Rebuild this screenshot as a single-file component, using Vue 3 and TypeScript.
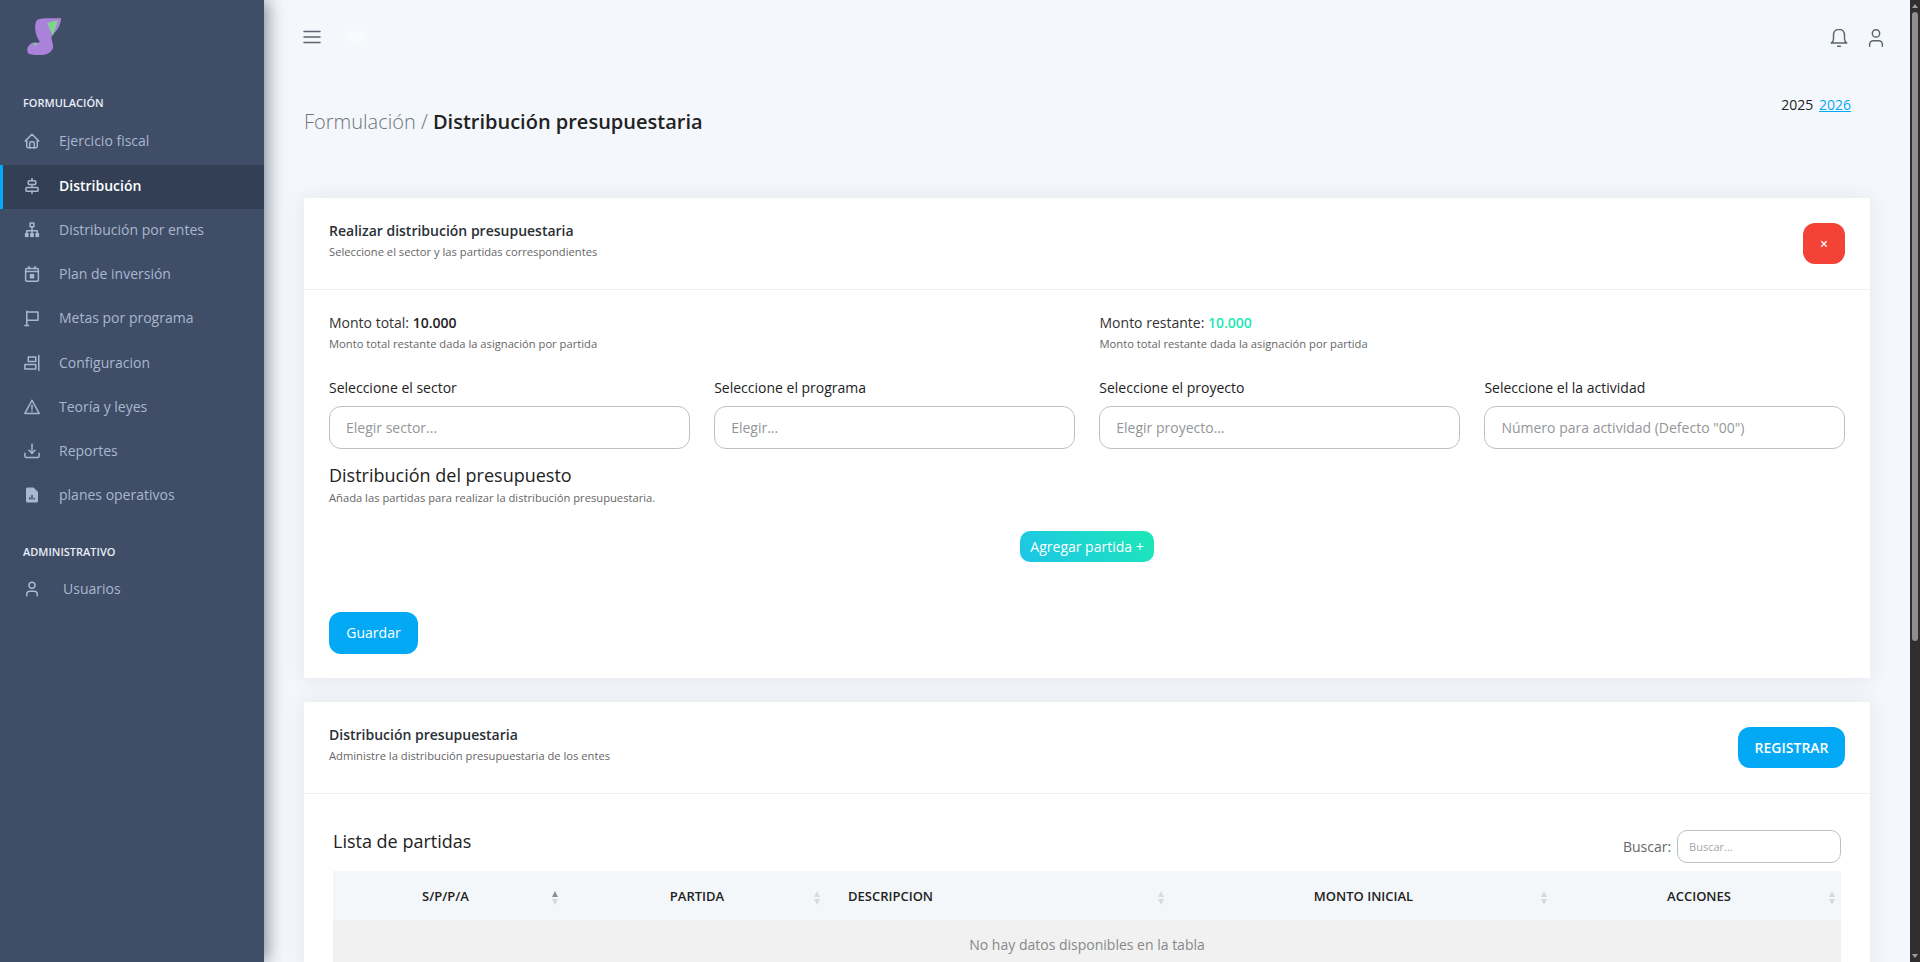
<script setup lang="ts">
interface NavItem {
  label: string
  stroke: string[]
  fill?: string[]
  dark?: string[]
  active?: boolean
}

const nav: NavItem[] = [
  {
    label: 'Ejercicio fiscal',
    stroke: ['M5 12H3l9-9 9 9h-2', 'M5 12v7a2 2 0 0 0 2 2h10a2 2 0 0 0 2-2v-7', 'M9 21v-6a2 2 0 0 1 2-2h2a2 2 0 0 1 2 2v6'],
  },
  {
    label: 'Distribución',
    active: true,
    stroke: [
      'M12 2v3', 'M8 5h8a1 1 0 0 1 1 1v3a1 1 0 0 1-1 1H8a1 1 0 0 1-1-1V6a1 1 0 0 1 1-1z', 'M12 10v4',
      'M5 14h14a1 1 0 0 1 1 1v3a1 1 0 0 1-1 1H5a1 1 0 0 1-1-1v-3a1 1 0 0 1 1-1z', 'M12 19v3',
    ],
  },
  {
    label: 'Distribución por entes',
    stroke: ['M9.5 2.5h5v5h-5z', 'M12 8v5', 'M5 16v-3h14v3', 'M12 13v3'],
    fill: ['M2.5 16h5v5.500h-5z', 'M9.500 16h5v5.500h-5z', 'M16.500 16h5v5.500h-5z'],
  },
  {
    label: 'Plan de inversión',
    stroke: ['M5 4.500h14a1.500 1.500 0 0 1 1.500 1.500v14a1.500 1.500 0 0 1-1.500 1.500H5A1.500 1.500 0 0 1 3.500 20V6A1.500 1.500 0 0 1 5 4.500z', 'M8 2v3', 'M16 2v3', 'M3.500 8.500h17'],
    fill: ['M9 12h6v6H9z'],
  },
  { label: 'Metas por programa', stroke: ['M5 22V3', 'M5 4h15v11H5', 'M2.500 22h5'] },
  {
    label: 'Configuracion',
    stroke: ['M21 2v20', 'M7 4h10v6H7z', 'M2.500 14H17v6H2.500z'],
  },
  { label: 'Teoría y leyes', stroke: ['M12 3 2.500 20.500h19z', 'M12 9.500v5.500', 'M12 17.800v.2'] },
  {
    label: 'Reportes',
    stroke: ['M12 3v12', 'M8 11l4 4 4-4', 'M2.500 15v3.500a2 2 0 0 0 2 2h15a2 2 0 0 0 2-2V15'],
  },
  {
    label: 'planes operativos',
    stroke: [],
    fill: ['M6 2h8l6 6v12a2 2 0 0 1-2 2H6a2 2 0 0 1-2-2V4a2 2 0 0 1 2-2z'],
    dark: ['M9 18v-3', 'M12 18v-6', 'M15 18v-2'],
  },
]

const userIcon = ['M12 3a4 4 0 1 0 0 8 4 4 0 0 0 0-8z', 'M5 21v-2a4 4 0 0 1 4-4h6a4 4 0 0 1 4 4v2']

const fields = [
  { label: 'Seleccione el sector', placeholder: 'Elegir sector...' },
  { label: 'Seleccione el programa', placeholder: 'Elegir...' },
  { label: 'Seleccione el proyecto', placeholder: 'Elegir proyecto...' },
  { label: 'Seleccione el la actividad', placeholder: 'Número para actividad (Defecto "00")' },
]

const columns = [
  { label: 'S/P/P/A', key: 'c1', sorted: true },
  { label: 'PARTIDA', key: 'c2', sorted: false },
  { label: 'DESCRIPCION', key: 'c3', sorted: false },
  { label: 'MONTO INICIAL', key: 'c4', sorted: false },
  { label: 'ACCIONES', key: 'c5', sorted: false },
]
</script>

<template>
  <div class="app">
    <aside class="sidebar">
      <div class="logo-row">
        <svg class="logo" viewBox="0 0 34 37" aria-hidden="true">
          <path fill="#ab82d9" d="M10 2C16-1 28 1 34 0c0 6-3 12-7 15-4 3-2 7-1 12 1 6-5 10-11 10-6 0-12 0-14-2-2-4 0-8 4-10 3-1 6 0 8-1C9 19 6 8 10 2z" />
          <path fill="#7fd38c" d="M20 5 31 2l-5 16z" />
          <path fill="#7fd38c" d="M6 25l5 1-3 2z" />
        </svg>
      </div>
      <div class="section-label">FORMULACIÓN</div>
      <ul class="nav-list">
        <li v-for="item in nav" :key="item.label" class="nav-item" :class="{ active: item.active }">
          <svg class="nav-icon" viewBox="0 0 24 24" aria-hidden="true">
            <path v-for="d in item.stroke" :key="d" :d="d" class="ic-stroke" />
            <path v-for="d in item.fill" :key="d" :d="d" class="ic-fill" />
            <path v-for="d in item.dark" :key="d" :d="d" class="ic-dark" />
          </svg>
          <span>{{ item.label }}</span>
        </li>
      </ul>
      <div class="section-label admin">ADMINISTRATIVO</div>
      <ul class="nav-list">
        <li class="nav-item users">
          <svg class="nav-icon" viewBox="0 0 24 24" aria-hidden="true">
            <path v-for="d in userIcon" :key="d" :d="d" class="ic-stroke" />
          </svg>
          <span>Usuarios</span>
        </li>
      </ul>
    </aside>

    <main class="main">
      <header class="topbar">
        <div class="top-left">
          <svg class="top-icon burger" viewBox="0 0 20 20" aria-hidden="true">
            <path d="M2 4.500h16M2 10h16M2 15.500h16" />
          </svg>
          <span class="brand-ghost"></span>
        </div>
        <div class="top-right">
          <svg class="top-icon" viewBox="0 0 24 24" aria-hidden="true">
            <path d="M12 2.500c-3.800 0-6 3-6 6.500v4c0 2-1.200 3.500-2.500 4.500h17c-1.300-1-2.500-2.500-2.500-4.500V9c0-3.500-2.200-6.500-6-6.500z" />
            <path d="M10.500 21h3" />
          </svg>
          <svg class="top-icon" viewBox="0 0 24 24" aria-hidden="true">
            <path v-for="d in userIcon" :key="d" :d="d" />
          </svg>
        </div>
      </header>

      <div class="page-head">
        <h1 class="crumb"><span class="crumb-light">Formulación / </span><span class="crumb-strong">Distribución presupuestaria</span></h1>
        <div class="years"><span>2025</span> <a href="#" class="year-link">2026</a></div>
      </div>

      <section class="card">
        <div class="card-header">
          <div>
            <h5 class="card-title">Realizar distribución presupuestaria</h5>
            <p class="small">Seleccione el sector y las partidas correspondientes</p>
          </div>
          <button class="btn btn-red" type="button">×</button>
        </div>
        <div class="card-body">
          <div class="amounts">
            <div>
              <div class="amount">Monto total: <b>10.000</b></div>
              <p class="small amount-note">Monto total restante dada la asignación por partida</p>
            </div>
            <div>
              <div class="amount">Monto restante: <b class="teal">10.000</b></div>
              <p class="small amount-note">Monto total restante dada la asignación por partida</p>
            </div>
          </div>
          <div class="fields">
            <label v-for="f in fields" :key="f.label" class="field">
              <span class="field-label">{{ f.label }}</span>
              <input class="input" type="text" :placeholder="f.placeholder" />
            </label>
          </div>
          <h4 class="dist-title">Distribución del presupuesto</h4>
          <p class="small dist-note">Añada las partidas para realizar la distribución presupuestaria.</p>
          <div class="add-row">
            <button class="btn-add" type="button">Agregar partida +</button>
          </div>
          <button class="btn btn-blue btn-save" type="button">Guardar</button>
        </div>
      </section>

      <section class="card card-second">
        <div class="card-header">
          <div>
            <h5 class="card-title">Distribución presupuestaria</h5>
            <p class="small">Administre la distribución presupuestaria de los entes</p>
          </div>
          <button class="btn btn-blue btn-register" type="button">REGISTRAR</button>
        </div>
        <div class="list-body">
          <div class="list-head">
            <h4 class="list-title">Lista de partidas</h4>
            <label class="search">
              <span>Buscar:</span>
              <input class="search-input" type="text" placeholder="Buscar..." />
            </label>
          </div>
          <table class="table">
            <thead>
              <tr>
                <th v-for="c in columns" :key="c.key" :class="c.key">
                  {{ c.label }}
                  <span class="sort" :class="{ sorted: c.sorted }"></span>
                </th>
              </tr>
            </thead>
            <tbody>
              <tr>
                <td colspan="5">No hay datos disponibles en la tabla</td>
              </tr>
            </tbody>
          </table>
        </div>
      </section>
    </main>

    <div class="scrollbar" aria-hidden="true">
      <span class="arrow-up"></span>
      <span class="thumb"></span>
      <span class="arrow-down"></span>
    </div>
  </div>
</template>

<style>
html,
body {
  margin: 0;
  overflow: hidden;
}
</style>

<style scoped>
* {
  box-sizing: border-box;
}
.app {
  display: flex;
  width: 1920px;
  height: 962px;
  overflow: hidden;
  background: #f4f7fb;
  font-family: 'Open Sans', 'Noto Sans', sans-serif;
  font-size: 14px;
  color: #222;
}
.sidebar {
  position: relative;
  z-index: 2;
  flex: 0 0 264px;
  background: #3f4d67;
  box-shadow: 3px 0 16px rgba(50, 62, 85, 0.6);
}
.logo-row {
  height: 96px;
  padding: 18px 0 0 27px;
}
.logo {
  display: block;
  width: 34px;
  height: 37px;
  filter: blur(0.5px);
}
.section-label {
  height: 14px;
  margin: 0 0 10px 23px;
  font-size: 11px;
  line-height: 14px;
  font-weight: 600;
  color: #e8edf7;
}
.section-label.admin {
  margin: 28px 0 9px 23px;
}
.nav-list {
  margin: 0;
  padding: 0;
  list-style: none;
}
.nav-item {
  display: flex;
  align-items: center;
  height: 44px;
  padding: 0 0 1px 23px;
  font-size: 14px;
  color: #a9b7d0;
}
.nav-item:nth-child(-n + 5) {
  padding-bottom: 3px;
}
.nav-item:first-child {
  height: 45px;
  padding-bottom: 4px;
}
.nav-item.active {
  background: #333f54;
  color: #fff;
  font-weight: 600;
  box-shadow: inset 3px 0 0 #04a9f5;
}
.nav-icon {
  flex: 0 0 18px;
  width: 18px;
  height: 18px;
  margin-right: 18px;
}
.users .nav-icon {
  margin-right: 22px;
}
.ic-stroke {
  fill: none;
  stroke: #a9b7d0;
  stroke-width: 2;
  stroke-linecap: round;
  stroke-linejoin: round;
}
.ic-fill {
  fill: #a9b7d0;
}
.ic-dark {
  fill: none;
  stroke: #3f4d67;
  stroke-width: 2;
}
.main {
  flex: 1 1 auto;
  min-width: 0;
  padding: 0 40px;
}
.topbar {
  display: flex;
  align-items: center;
  justify-content: space-between;
  height: 76px;
  margin: 0 -16.500px 0 -2px;
}
.top-left {
  display: flex;
  align-items: center;
  gap: 22px;
  margin-top: -2px;
}
.brand-ghost {
  width: 24px;
  height: 14px;
  border-radius: 4px;
  background: #fff;
  opacity: 0.35;
  filter: blur(3px);
}
.top-icon {
  width: 22px;
  height: 22px;
  fill: none;
  stroke: #5b6470;
  stroke-width: 1.600;
  stroke-linecap: round;
  stroke-linejoin: round;
}
.burger {
  width: 20px;
  height: 20px;
  stroke-width: 1.500;
}
.top-right {
  display: flex;
  gap: 14.500px;
}
.page-head {
  display: flex;
  justify-content: space-between;
  align-items: flex-start;
  height: 122px;
}
.crumb {
  margin: 0;
  padding-top: 32px;
  font-size: 20px;
  line-height: 28px;
  font-weight: 400;
  color: #222;
}
.crumb-light {
  font-weight: 300;
  color: #6c757d;
}
.crumb-strong {
  font-weight: 600;
}
.years {
  padding: 19px 19px 0 0;
  font-size: 14px;
  line-height: 20px;
}
.year-link {
  margin-left: 2px;
  color: #04a9f5;
  text-decoration: underline;
}
.card {
  background: #fff;
  box-shadow: 0 1px 20px 0 rgba(69, 90, 100, 0.1);
}
.card-second {
  margin-top: 24px;
}
.card-header {
  display: flex;
  justify-content: space-between;
  align-items: flex-start;
  height: 92px;
  padding: 25px 25px 0;
  border-bottom: 1px solid #f1f1f1;
}
.card-title {
  margin: 0;
  font-size: 14px;
  line-height: 16px;
  font-weight: 600;
  color: #2a2f36;
}
.small {
  margin: 5px 0 0;
  font-size: 11.200px;
  line-height: 16px;
  color: #666;
}
.card-body {
  padding: 24px 25px 24px;
}
.amounts {
  display: grid;
  grid-template-columns: 1fr 1fr;
  column-gap: 25px;
}
.amount {
  font-size: 14px;
  line-height: 18px;
  color: #333;
}
.amount b {
  font-weight: 600;
  color: #222;
}
.amount b.teal {
  color: #1de9b6;
}
.amount-note {
  margin-top: 4px;
  line-height: 15px;
}
.fields {
  display: grid;
  grid-template-columns: repeat(4, 1fr);
  column-gap: 24.500px;
  margin-top: 28px;
}
.field {
  display: flex;
  flex-direction: column;
}
.field-label {
  font-size: 14px;
  line-height: 18px;
  color: #222;
}
.input {
  width: 100%;
  height: 43px;
  margin-top: 9px;
  padding: 0 16px;
  border: 1px solid #bdc1c6;
  border-radius: 12px;
  outline: none;
  background: #fff;
  font: inherit;
  font-size: 14px;
  color: #333;
}
.input::placeholder {
  color: #939699;
  opacity: 1;
}
.dist-title {
  margin: 13px 0 0;
  font-size: 18px;
  line-height: 26px;
  font-weight: 400;
  color: #222;
}
.dist-note {
  margin-top: 3px;
  line-height: 14px;
}
.add-row {
  display: flex;
  justify-content: center;
  margin-top: 26px;
}
.btn-add {
  width: 134px;
  height: 31px;
  padding: 0;
  border: 0;
  border-radius: 10px;
  background: linear-gradient(-135deg, #1de9b6, #1dc4e9);
  font: inherit;
  font-size: 14px;
  font-weight: 500;
  color: #fff;
}
.btn {
  border: 0;
  border-radius: 12px;
  font: inherit;
  font-size: 14px;
  font-weight: 600;
  color: #fff;
}
.btn-red {
  width: 42px;
  height: 41px;
  background: #f44236;
  font-size: 14px;
  line-height: 1;
}
.btn-blue {
  background: #04a9f5;
}
.btn-save {
  display: block;
  width: 89px;
  height: 42px;
  margin-top: 50px;
  padding: 0 0 2px;
  font-weight: 500;
}
.btn-register {
  width: 107px;
  height: 41px;
  padding: 0;
}
.list-body {
  padding: 36px 29px 0;
}
.list-head {
  display: flex;
  justify-content: space-between;
  align-items: flex-start;
}
.list-title {
  margin: 0;
  font-size: 18px;
  line-height: 22px;
  font-weight: 400;
  color: #222;
}
.search {
  display: flex;
  align-items: center;
  gap: 6px;
  font-size: 14px;
  color: #666;
}
.search-input {
  width: 164px;
  height: 33px;
  padding: 0 11px;
  border: 1px solid #bdc1c6;
  border-radius: 10px;
  outline: none;
  font: inherit;
  font-size: 11px;
}
.search-input::placeholder {
  color: #a2a7ac;
  opacity: 1;
}
.table {
  width: 100%;
  margin-top: 8px;
  border-collapse: collapse;
  table-layout: fixed;
}
th {
  position: relative;
  height: 49px;
  padding: 0 6px 0 10px;
  background: #f4f7fa;
  font-size: 13px;
  font-weight: 600;
  text-align: center;
  color: #222;
}
.c1 {
  width: 231px;
  padding: 0 12px 0 6px;
}
.c2 {
  width: 262px;
}
.c3 {
  width: 344px;
  padding-left: 22px;
  text-align: left;
}
.c4 {
  width: 383px;
}
.sort {
  position: absolute;
  top: 20px;
  right: 5px;
  width: 7px;
  height: 14px;
}
.sort::before,
.sort::after {
  content: '';
  position: absolute;
  left: 0;
  width: 0;
  height: 0;
  border-left: 3.500px solid transparent;
  border-right: 3.500px solid transparent;
}
.sort::before {
  top: 0;
  border-bottom: 6px solid #d6dadd;
}
.sort::after {
  bottom: 0;
  border-top: 6px solid #d6dadd;
}
.sort.sorted::before {
  border-bottom-color: #8a8f94;
}
td {
  height: 48px;
  background: #f1f1f1;
  font-size: 14px;
  text-align: center;
  color: #888;
}
.scrollbar {
  position: relative;
  flex: 0 0 10px;
  background: #2f2f2f;
}
.thumb {
  position: absolute;
  top: 12px;
  left: 2px;
  width: 6px;
  height: 629px;
  border-radius: 3px;
  background: #8f8f8f;
}
.arrow-up,
.arrow-down {
  position: absolute;
  left: 2px;
  width: 0;
  height: 0;
  border-left: 3px solid transparent;
  border-right: 3px solid transparent;
}
.arrow-up {
  top: 4px;
  border-bottom: 4px solid #a0a0a0;
}
.arrow-down {
  bottom: 4px;
  border-top: 4px solid #a0a0a0;
}
</style>
